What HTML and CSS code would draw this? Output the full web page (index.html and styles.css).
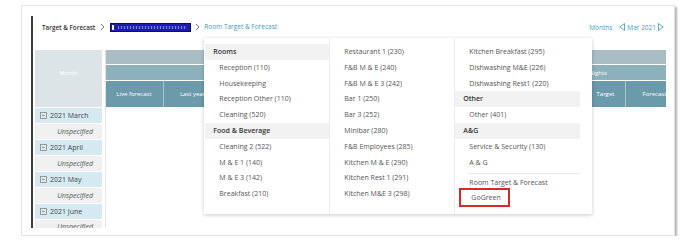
FILE: index.html
```html
<!DOCTYPE html>
<html lang="en">
<head>
    <meta charset="UTF-8">
    <title>Room Target &amp; Forecast</title>
    <link rel="stylesheet" href="styles.css">
</head>
<body>
    <div class="frame">
        <div class="panel">
            <div class="toolbar">
                <nav class="crumbs">
                    <span class="crumb-root">Target &amp; Forecast</span>
                    <svg class="chev" width="5" height="8" viewBox="0 0 5 8"><polyline points="1,1 4,4 1,7"/></svg>
                    <span class="crumb-picked"><span class="picked-bar"></span><span class="picked-blur"></span></span>
                    <svg class="chev tight" width="5" height="8" viewBox="0 0 5 8"><polyline points="1,1 4,4 1,7"/></svg>
                    <span class="crumb-menu">
                        <a class="crumb-link" href="#">Room Target &amp; Forecast</a>

                        <!-- page switcher menu -->
                        <div class="dropdown">
                            <ul class="menu-col">
                                <li class="menu-head">Rooms</li>
                                <li class="menu-item">Reception (110)</li>
                                <li class="menu-item">Housekeeping</li>
                                <li class="menu-item">Reception Other (110)</li>
                                <li class="menu-item">Cleaning (520)</li>
                                <li class="menu-head">Food &amp; Beverage</li>
                                <li class="menu-item">Cleaning 2 (522)</li>
                                <li class="menu-item">M &amp; E 1 (140)</li>
                                <li class="menu-item">M &amp; E 3 (142)</li>
                                <li class="menu-item">Breakfast (210)</li>
                            </ul>
                            <ul class="menu-col">
                                <li class="menu-item">Restaurant 1 (230)</li>
                                <li class="menu-item">F&amp;B M &amp; E (240)</li>
                                <li class="menu-item">F&amp;B M &amp; E 3 (242)</li>
                                <li class="menu-item">Bar 1 (250)</li>
                                <li class="menu-item">Bar 3 (252)</li>
                                <li class="menu-item">Minibar (280)</li>
                                <li class="menu-item">F&amp;B Employees (285)</li>
                                <li class="menu-item">Kitchen M &amp; E (290)</li>
                                <li class="menu-item">Kitchen Rest 1 (291)</li>
                                <li class="menu-item">Kitchen M&amp;E 3 (298)</li>
                            </ul>
                            <ul class="menu-col last">
                                <li class="menu-item">Kitchen Breakfast (295)</li>
                                <li class="menu-item">Dishwashing M&amp;E (226)</li>
                                <li class="menu-item">Dishwashing Rest1 (220)</li>
                                <li class="menu-head">Other</li>
                                <li class="menu-item">Other (401)</li>
                                <li class="menu-head">A&amp;G</li>
                                <li class="menu-item">Service &amp; Security (130)</li>
                                <li class="menu-item">A &amp; G</li>
                                <li class="menu-sep"></li>
                                <li class="menu-item">Room Target &amp; Forecast</li>
                                <li class="menu-item"><span class="marked">GoGreen</span></li>
                            </ul>
                        </div>
                    </span>
                </nav>
                <div class="period">
                    <a class="period-link" href="#">Months</a>
                    <span class="pager">
                        <svg class="tri" width="6" height="8" viewBox="0 0 6 8"><polygon points="5.5,0.5 0.8,4 5.5,7.5"/></svg>
                        Mar 2021
                        <svg class="tri" width="6" height="8" viewBox="0 0 6 8"><polygon points="0.5,0.5 5.2,4 0.5,7.5"/></svg>
                    </span>
                </div>
            </div>

            <div class="grid">
                <div class="month-col">
                    <div class="month-head">Month</div>
                    <div class="mrow month"><svg class="fold" width="7" height="7" viewBox="0 0 7 7"><rect x="0.5" y="0.5" width="6" height="6"/><line x1="2" y1="3.5" x2="5" y2="3.5"/></svg>2021 March</div>
                    <div class="mrow unspec">Unspecified</div>
                    <div class="mrow month"><svg class="fold" width="7" height="7" viewBox="0 0 7 7"><rect x="0.5" y="0.5" width="6" height="6"/><line x1="2" y1="3.5" x2="5" y2="3.5"/></svg>2021 April</div>
                    <div class="mrow unspec">Unspecified</div>
                    <div class="mrow month"><svg class="fold" width="7" height="7" viewBox="0 0 7 7"><rect x="0.5" y="0.5" width="6" height="6"/><line x1="2" y1="3.5" x2="5" y2="3.5"/></svg>2021 May</div>
                    <div class="mrow unspec">Unspecified</div>
                    <div class="mrow month"><svg class="fold" width="7" height="7" viewBox="0 0 7 7"><rect x="0.5" y="0.5" width="6" height="6"/><line x1="2" y1="3.5" x2="5" y2="3.5"/></svg>2021 June</div>
                    <div class="mrow unspec last">Unspecified</div>
                </div>
                <div class="data-col">
                    <div class="hrow r1"></div>
                    <div class="hrow r2">
                        <span class="group wide"></span>
                        <span class="group">Room Nights</span>
                    </div>
                    <div class="hrow r3">
                        <span class="hcell">Live forecast</span>
                        <span class="hcell">Last year</span>
                        <span class="hcell"></span>
                        <span class="hcell"></span>
                        <span class="hcell"></span>
                        <span class="hcell"></span>
                        <span class="hcell wider"></span>
                        <span class="hcell wider"></span>
                        <span class="hcell narrow">Target</span>
                        <span class="hcell">Forecast</span>
                    </div>
                </div>
            </div>
        </div>
    </div>
</body>
</html>
```

FILE: styles.css
```css
* {
    box-sizing: border-box;
}
body {
    margin: 0;
    background-color: #fff;
    font-family: 'Open Sans', 'Liberation Sans', sans-serif;
    font-size: 7px;
    color: #555;
}
.frame {
    margin: 5px 0 0 21px;
    width: 654px;
    height: 231px;
    border: 1px solid #e4e4e4;
    box-shadow: 2px 2px 2px rgba(0,0,0,0.3);
    padding: 10px 0 0 9px;
}
.panel {
    width: 635px;
    height: 212px;
    border-left: 2px solid #3c3c3c;
    overflow: hidden;
}

/* breadcrumb bar */
.toolbar {
    height: 22px;
    display: flex;
    align-items: center;
    justify-content: space-between;
    padding: 0 2px 0 9px;
    position: relative;
    z-index: 2;
    font-size: 6.5px;
}
.crumbs {
    display: flex;
    align-items: center;
    height: 12px;
}
.crumb-root {
    font-weight: 600;
    font-size: 6.3px;
    color: #333;
}
.chev {
    margin: 0 5px;
    fill: none;
    stroke: #777;
    stroke-width: 1;
}
.chev.tight {
    margin: 0 4px;
}
.crumb-picked {
    width: 81px;
    height: 9px;
    background-color: #1d1dac;
    border: 1px solid #0c0c66;
    display: flex;
    align-items: center;
    padding-left: 1px;
}
.picked-bar {
    width: 2px;
    height: 5px;
    background-color: #f2f2ff;
}
.picked-blur {
    flex-grow: 1;
    height: 3px;
    margin: 0 3px 0 4px;
    background: repeating-linear-gradient(90deg, #7b7be0 0 1px, #2a2ab8 1px 3px);
}
.crumb-menu {
    position: relative;
    height: 12px;
    line-height: 12px;
}
.crumb-link,
.period-link {
    color: #3f9cc4;
    text-decoration: none;
}
.period {
    display: flex;
    align-items: center;
    color: #3f9cc4;
}
.pager {
    margin-left: 7px;
    display: flex;
    align-items: center;
    gap: 2px;
}
.tri {
    fill: none;
    stroke: #4aa3c8;
    stroke-width: 0.9;
}

/* dropdown */
.dropdown {
    position: absolute;
    left: 0;
    top: 17px;
    width: 388px;
    height: 176px;
    background-color: #fff;
    box-shadow: 0 1px 4px rgba(0,0,0,0.22);
    display: flex;
    padding: 0 10px 0 1px;
    font-size: 7px;
    line-height: 15.8px;
    white-space: nowrap;
}
.menu-col {
    list-style-type: none;
    margin: 0;
    padding: 6px 0 0;
    width: 125px;
    border-right: 1px solid #ececec;
}
.menu-col.last {
    border-right: none;
}
.menu-head {
    background-color: #f2f2f2;
    font-weight: 600;
    color: #333;
    padding-left: 8px;
}
.menu-item {
    padding-left: 14px;
    height: 15.8px;
    color: #555;
}
.menu-sep {
    height: 1px;
    background-color: #e6e6e6;
    margin: 3px 0 1px 13px;
}
.marked {
    display: inline-block;
    margin-left: -10px;
    padding: 0 10px;
    width: 51px;
    height: 19px;
    line-height: 15px;
    border: 2px solid #d8272d;
    position: relative;
    top: -3px;
}

/* month grid */
.grid {
    display: flex;
    margin: 12px 0 0 2px;
    height: 180px;
}
.month-col {
    width: 69px;
    margin-right: 3px;
}
.month-head {
    height: 57px;
    background-color: #dde4e7;
    color: #fff;
    text-align: center;
    padding-top: 19px;
    font-size: 6px;
}
.mrow {
    height: 16px;
    border-top: 1px solid #fff;
    display: flex;
    align-items: center;
    color: #444;
}
.mrow.month {
    background-color: #d6e9f0;
    padding-left: 5px;
}
.mrow.unspec {
    background-color: #f0f0f0;
    font-style: italic;
    justify-content: flex-end;
    padding-right: 9px;
    color: #555;
}
.mrow.unspec.last {
    align-items: flex-start;
    padding-top: 2px;
}
.fold {
    margin-right: 3px;
    fill: none;
    stroke: #888;
    stroke-width: 0.8;
}
.data-col {
    flex-grow: 1;
    border-left: 1px solid #e3e3e3;
    overflow: hidden;
}
.hrow {
    margin-left: -1px;
    display: flex;
    color: #fff;
    white-space: nowrap;
}
.r1 {
    height: 14px;
    background-color: #a9bdc3;
    margin-bottom: 1px;
}
.r2 {
    height: 15px;
    background-color: #8db1bc;
    margin-bottom: 1px;
    font-size: 6px;
    align-items: center;
}
.group {
    width: 154px;
    flex-shrink: 0;
    text-align: center;
}
.group.wide {
    width: 407px;
}
.r3 {
    height: 26px;
    background-color: #6b9aaa;
    font-size: 6px;
}
.hcell {
    width: 58px;
    flex-shrink: 0;
    display: flex;
    align-items: center;
    justify-content: center;
    border-left: 1px solid #a8c5cf;
}
.hcell:first-child {
    border-left: none;
}
.hcell.wider {
    width: 66px;
}
.hcell.narrow {
    width: 40px;
}
```
